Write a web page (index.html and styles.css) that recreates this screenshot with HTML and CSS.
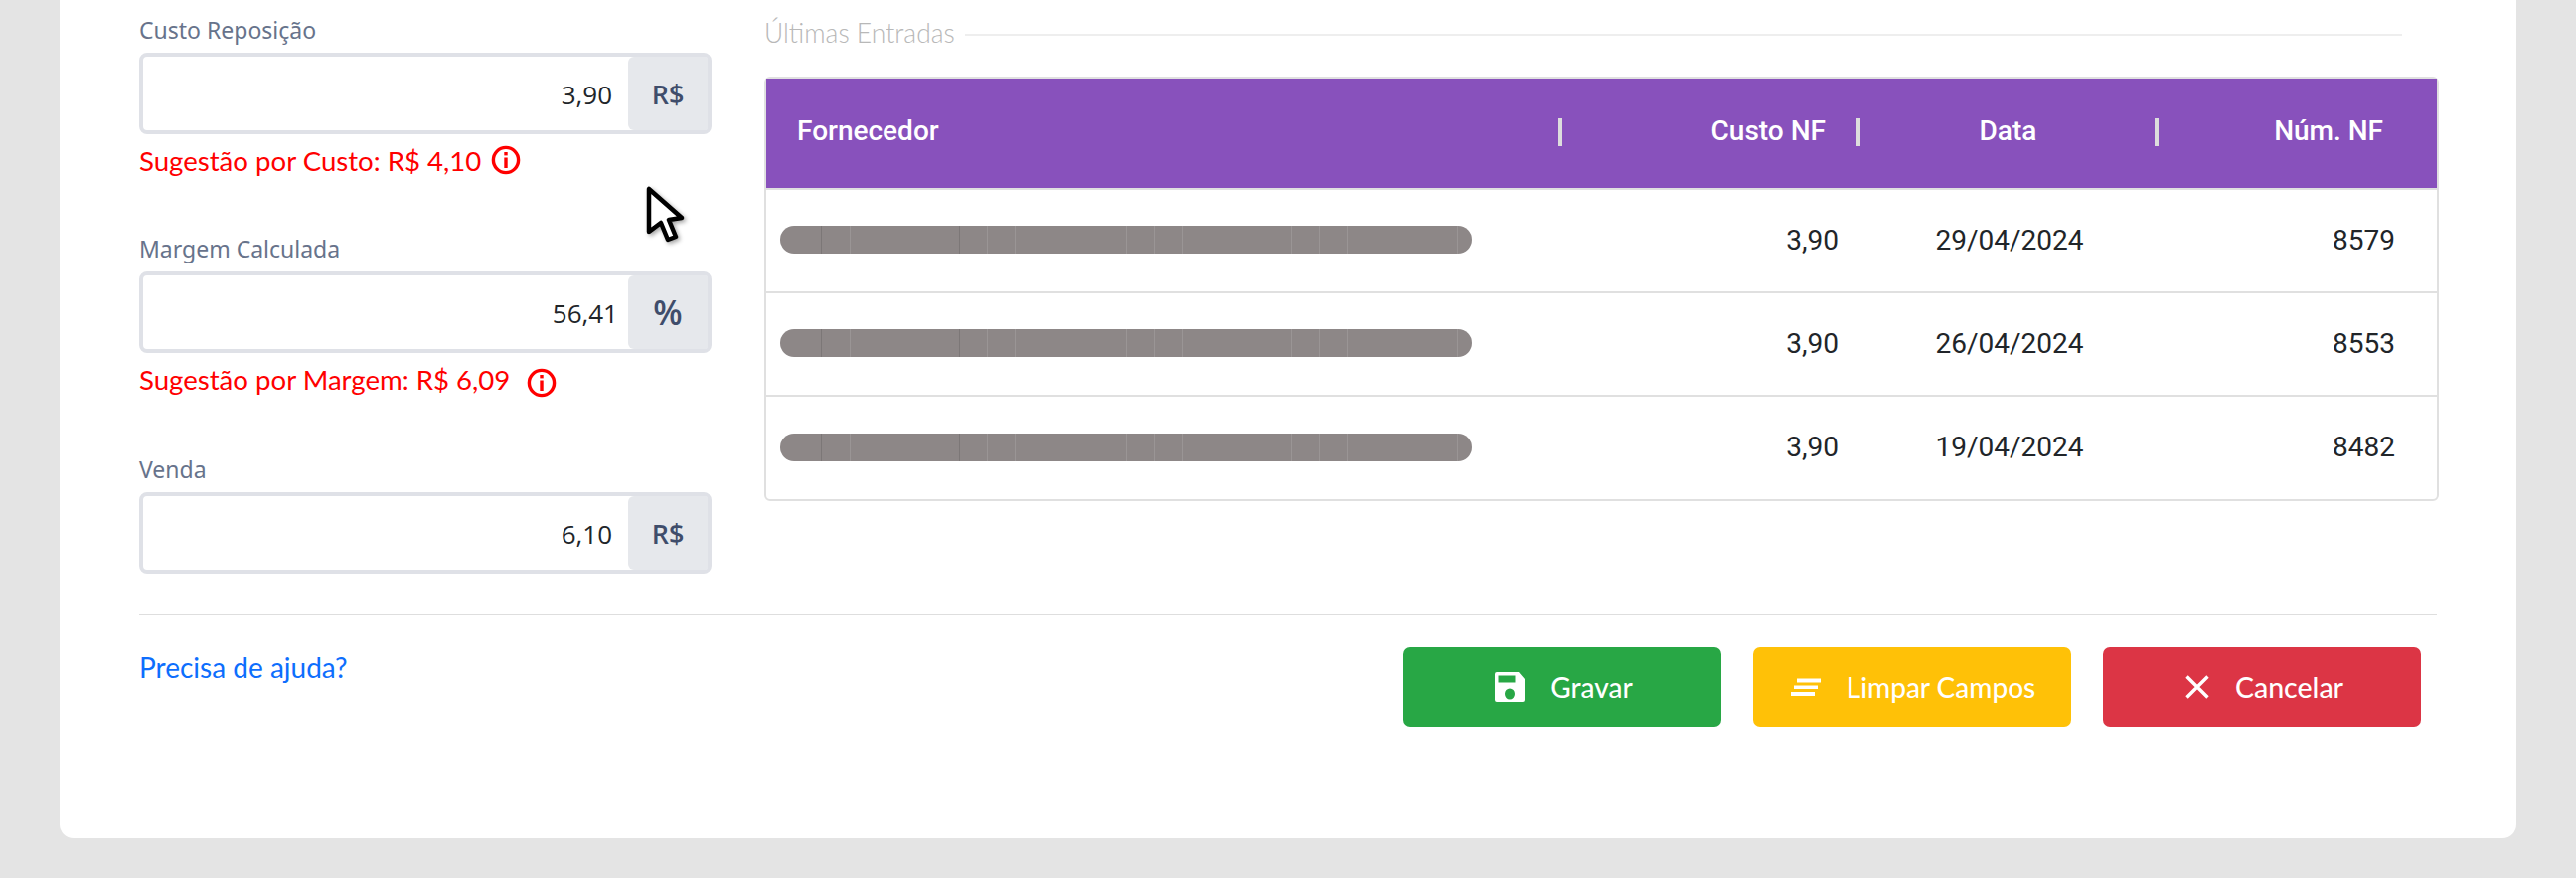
FILE: index.html
```html
<!DOCTYPE html>
<html lang="pt-BR">
<head>
  <meta charset="UTF-8">
  <title>Produto</title>
  <link rel="stylesheet" href="styles.css">
</head>
<body>

<div class="card">
  <div class="main-row">
    <div class="price-col">
      <div class="form-group">
        <label>Custo Reposição</label>
        <div class="input-group">
          <div class="input-value">3,90</div>
          <div class="addon">R$</div>
        </div>
        <div class="hint">
          <span>Sugestão por Custo: R$ 4,10</span>
          <svg class="info-icon" viewBox="0 0 30 30"><circle cx="15" cy="15" r="12.6" fill="none" stroke="#f00" stroke-width="3.400"/><rect x="13.300" y="7" width="3.400" height="3.400" fill="#f00"/><rect x="13.300" y="12.500" width="3.400" height="10.500" fill="#f00"/></svg>
        </div>
      </div>

      <div class="form-group form-group-tall">
        <label>Margem Calculada</label>
        <div class="input-group">
          <div class="input-value input-value-wide">56,41</div>
          <div class="addon addon-bold">%</div>
        </div>
        <div class="hint">
          <span>Sugestão por Margem: R$ 6,09</span>
          <svg class="info-icon info-icon-low" viewBox="0 0 30 30"><circle cx="15" cy="15" r="12.6" fill="none" stroke="#f00" stroke-width="3.400"/><rect x="13.300" y="7" width="3.400" height="3.400" fill="#f00"/><rect x="13.300" y="12.500" width="3.400" height="10.500" fill="#f00"/></svg>
        </div>
      </div>

      <div class="form-group form-group-last">
        <label>Venda</label>
        <div class="input-group">
          <div class="input-value">6,10</div>
          <div class="addon">R$</div>
        </div>
      </div>
    </div>

    <div class="entries-col">
      <div class="section-title"><span>Últimas Entradas</span></div>
      <table class="entries">
        <thead>
          <tr>
            <th class="col-name">Fornecedor</th>
            <th class="col-cost">Custo NF</th>
            <th class="col-date">Data</th>
            <th class="col-num">Núm. NF</th>
          </tr>
        </thead>
        <tbody>
          <tr>
            <td class="col-name"><div class="redacted"></div></td>
            <td class="col-cost">3,90</td>
            <td class="col-date">29/04/2024</td>
            <td class="col-num">8579</td>
          </tr>
          <tr>
            <td class="col-name"><div class="redacted"></div></td>
            <td class="col-cost">3,90</td>
            <td class="col-date">26/04/2024</td>
            <td class="col-num">8553</td>
          </tr>
          <tr class="last-row">
            <td class="col-name"><div class="redacted"></div></td>
            <td class="col-cost">3,90</td>
            <td class="col-date">19/04/2024</td>
            <td class="col-num">8482</td>
          </tr>
        </tbody>
      </table>
    </div>
  </div>

  <div class="footer-row">
    <a class="help-link" href="#">Precisa de ajuda?</a>
    <div class="actions">
      <button class="btn btn-save">
        <svg class="btn-icon" viewBox="0 0 30 30"><path fill="#fff" fill-rule="evenodd" d="M2 0H24L30 7V28A2 2 0 0 1 28 30H2A2 2 0 0 1 0 28V2A2 2 0 0 1 2 0ZM3.500 3.500V10.500H20.500V3.500ZM15 16.500A5 5.500 0 1 0 15 27.500A5 5.500 0 1 0 15 16.500Z"/></svg>
        Gravar
      </button>
      <button class="btn btn-clear">
        <svg class="btn-icon" viewBox="0 0 30 30"><path fill="#fff" d="M6 6.500H30V10.500H6ZM3 13.500H27V17H3ZM0 20H24V24H0Z"/></svg>
        Limpar Campos
      </button>
      <button class="btn btn-cancel">
        <svg class="btn-icon btn-icon-x" viewBox="0 0 24 24"><path fill="none" stroke="#fff" stroke-width="3.400" d="M1.500 1.500L22.500 22.500M22.500 1.500L1.500 22.500"/></svg>
        Cancelar
      </button>
    </div>
  </div>
</div>

<!-- mouse pointer caught in the screenshot -->
<svg class="pointer" viewBox="0 0 44 62"><path d="M4 4V47L16 38L23 55L31 52L24 35L37 33Z" fill="#fff" stroke="#000" stroke-width="4.500" stroke-linejoin="round"/></svg>

</body>
</html>
```

FILE: styles.css
```css
body {
  margin: 0;
  background-color: #e4e4e4;
  font-family: "Open Sans", sans-serif;
  position: relative;
  height: 883px;
  overflow: hidden;
}

.card {
  background: #fff;
  margin: 0 60px;
  height: 843px;
  box-sizing: border-box;
  padding: 16px 80px 0;
  border-radius: 0 0 14px 14px;
}

.main-row {
  display: flex;
  gap: 53px;
}

.price-col {
  width: 576px;
  flex-shrink: 0;
}

.form-group {
  height: 220px;
}

.form-group-tall {
  height: 222px;
}

.form-group-last {
  height: 119px;
}

.form-group label {
  display: block;
  height: 30px;
  line-height: 29px;
  margin-bottom: 7px;
  font-family: "Noto Sans", sans-serif;
  font-size: 23px;
  color: #67738b;
}

.input-group {
  display: flex;
  height: 82px;
  box-sizing: border-box;
  border: 4px solid #dfe1e7;
  border-radius: 8px;
  background: #fff;
}

.input-value {
  flex: 1;
  text-align: right;
  padding-right: 16px;
  font-size: 26px;
  line-height: 76px;
  color: #212529;
}

.input-value-wide {
  padding-right: 10px;
}

.addon {
  width: 80px;
  background: #e6e8ec;
  border-radius: 6px 2px 2px 6px;
  display: flex;
  align-items: center;
  justify-content: center;
  font-size: 27px;
  font-weight: 600;
  color: #3f4d6b;
}

.addon-bold {
  font-size: 34px;
  font-weight: 600;
}

.hint {
  display: flex;
  align-items: center;
  gap: 10px;
  height: 36px;
  margin-top: 8px;
  font-family: Lato, sans-serif;
  font-size: 27.600px;
  color: #f00;
}

.info-icon {
  width: 30px;
  height: 30px;
}

.info-icon-low {
  margin: 7px 0 0 7px;
}

.section-title {
  display: flex;
  align-items: center;
  gap: 10px;
  height: 34px;
  margin: 0 37px 27px 0;
  font-family: Lato, sans-serif;
  font-weight: 300;
  font-size: 26.500px;
  color: #b8b8b8;
}

.section-title::after {
  content: "";
  flex: 1;
  height: 2px;
  margin-top: 4px;
  background: #eee;
}

.entries-col {
  flex: 1;
  margin-right: -2px;
}

.entries {
  width: 100%;
  table-layout: fixed;
  border-collapse: separate;
  border-spacing: 0;
  border: 2px solid #e0e0e0;
  border-radius: 6px;
  font-family: Roboto, sans-serif;
  font-size: 28px;
  color: #212529;
}

.entries th {
  height: 110px;
  padding: 0 0 5px;
  box-sizing: border-box;
  background: #8851bc;
  color: #fff;
  font-weight: 500;
  font-size: 28px;
  position: relative;
}

.entries th::after {
  content: "";
  position: absolute;
  right: 0;
  top: 40px;
  width: 4px;
  height: 28px;
  background: #ddd;
}

.entries th:last-child::after {
  display: none;
}

.entries td {
  height: 100px;
  padding: 0 0 2px;
  border-top: 2px solid #e0e0e0;
}

.entries .last-row td {
  height: 101px;
}

.col-name {
  text-align: left;
}

.entries th.col-name {
  width: 801px;
  padding-left: 31px;
}

.entries td.col-name {
  padding-left: 14px;
}

.entries th.col-cost {
  width: 300px;
  text-align: right;
  padding-right: 35px;
}

.entries td.col-cost {
  text-align: right;
  padding-right: 22px;
}

.col-date {
  width: 300px;
  text-align: center;
}

.entries th.col-date {
  padding-right: 3px;
}

.entries th.col-num {
  text-align: right;
  padding-right: 54px;
}

.entries td.col-num {
  text-align: right;
  padding-right: 42px;
}

.redacted {
  width: 696px;
  height: 28px;
  border-radius: 14px;
  background-color: #8d8787;
  background-image: linear-gradient(to right,
    transparent 41px, #7c7777 41px, #7c7777 42px, transparent 42px,
    transparent 70px, #9a9595 70px, #9a9595 71px, transparent 71px,
    transparent 180px, #7c7777 180px, #7c7777 181px, transparent 181px,
    transparent 208px, #9a9595 208px, #9a9595 209px, transparent 209px,
    transparent 236px, #9a9595 236px, #9a9595 237px, transparent 237px,
    transparent 348px, #9a9595 348px, #9a9595 349px, transparent 349px,
    transparent 376px, #9a9595 376px, #9a9595 377px, transparent 377px,
    transparent 404px, #9a9595 404px, #9a9595 405px, transparent 405px,
    transparent 514px, #9a9595 514px, #9a9595 515px, transparent 515px,
    transparent 542px, #9a9595 542px, #9a9595 543px, transparent 543px,
    transparent 570px, #9a9595 570px, #9a9595 571px, transparent 571px,
    transparent 681px, #9a9595 681px, #9a9595 682px, transparent 682px);
}

.footer-row {
  display: flex;
  justify-content: space-between;
  align-items: flex-start;
  margin-top: 40px;
  padding: 32px 16px 0 0;
  border-top: 2px solid #dedede;
}

.help-link {
  font-family: Lato, sans-serif;
  font-size: 28px;
  line-height: 41px;
  color: #0d6efd;
  text-decoration: none;
}

.actions {
  display: flex;
  gap: 32px;
}

.btn {
  display: flex;
  align-items: center;
  justify-content: center;
  gap: 26px;
  width: 320px;
  height: 80px;
  border: none;
  border-radius: 7px;
  color: #fff;
  font-family: Lato, sans-serif;
  font-size: 28px;
  font-weight: 500;
}

.btn-save {
  background-color: #28a745;
  padding-left: 9px;
}

.btn-clear {
  background-color: #ffc107;
  padding-left: 8px;
}

.btn-cancel {
  background-color: #dc3545;
  padding-left: 11px;
  font-size: 28.500px;
}

.btn-icon {
  width: 30px;
  height: 30px;
}

.btn-icon-x {
  width: 24px;
  height: 24px;
}

.pointer {
  position: absolute;
  left: 649px;
  top: 186px;
  width: 44px;
  height: 62px;
  filter: drop-shadow(2px 2px 2px rgba(0, 0, 0, 0.35));
}
```
